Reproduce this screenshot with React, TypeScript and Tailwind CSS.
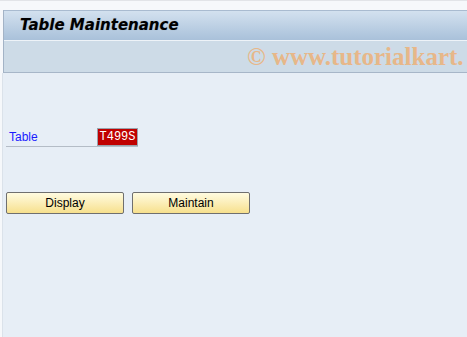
export default function App() {
  return (
    <div className="relative h-[337px] w-[467px] overflow-hidden bg-[#f6f8fb] font-['DejaVu_Sans',sans-serif]">
      <div className="h-px w-full bg-[#e2e4e8]" />
      <div className="flex h-[336px] flex-col pl-[2px]">
        {/* header */}
        <div className="mt-[9px] ml-px flex flex-col border-l border-[#a3b3c6]">
          <div className="flex h-[30px] items-center border-t border-[#a9bbd0] bg-gradient-to-b from-[#d3e1ef] to-[#a9c1da] pl-[16px]">
            <span className="font-['DejaVu_Sans',sans-serif] text-[15px] font-bold italic text-black [text-shadow:0_0_1px_rgba(0,0,0,0.25)]">
              Table Maintenance
            </span>
          </div>
          <div className="h-px bg-[#eef3f8]" />
          <div className="flex h-[32px] items-center whitespace-nowrap border-b border-[#a7b6c8] bg-[#cddbe7] pl-[243px]">
            <span className="font-['Liberation_Serif',serif] text-[25px] font-bold leading-none text-[#e7b789]">
              © www.tutorialkart.
            </span>
          </div>
        </div>

        {/* body */}
        <div className="flex flex-1 flex-col border-l border-[#dbe2ea] bg-[#e7eef6] pl-[3px]">
          <div className="mt-[55px] flex h-[19px] w-[132px] items-center border-b border-[#b4bcc6]">
            <span className="w-[91px] pl-[3px] font-['Liberation_Sans',sans-serif] text-[12px] text-[#1a1aff]">Table</span>
            <span className="flex h-[18px] w-[41px] items-center justify-center border border-[#9aa2ac] bg-[#c00000] font-['Liberation_Mono',monospace] text-[12px] text-white">
              T499S
            </span>
          </div>

          <div className="mt-[45px] flex gap-[8px]">
            <button className="h-[22px] w-[118px] rounded-[2px] border border-[#6f6f6f] bg-gradient-to-b from-[#fffbe0] to-[#f7e08c] font-['Liberation_Sans',sans-serif] text-[12px] text-black">
              Display
            </button>
            <button className="h-[22px] w-[118px] rounded-[2px] border border-[#6f6f6f] bg-gradient-to-b from-[#fffbe0] to-[#f7e08c] font-['Liberation_Sans',sans-serif] text-[12px] text-black">
              Maintain
            </button>
          </div>
        </div>
      </div>
    </div>
  );
}
